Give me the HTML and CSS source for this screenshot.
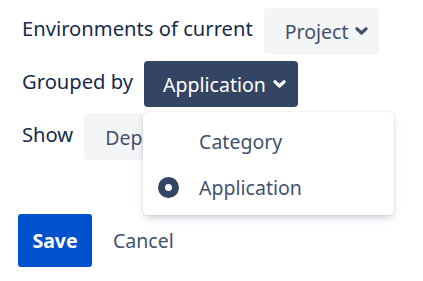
FILE: index.html
```html
<!DOCTYPE html>
<html lang="en">
<head>
<meta charset="UTF-8">
<title>Environment settings</title>
<link rel="stylesheet" href="styles.css">
</head>
<body>

<div class="settings">
  <div class="row">
    <span class="label">Environments of current</span>
    <button class="select">Project <svg class="chev" viewBox="0 0 13 8"><path d="M2 1.8 6.5 6 11 1.8"/></svg></button>
  </div>

  <div class="row">
    <span class="label">Grouped by</span>
    <div class="picker">
      <button class="select open">Application <svg class="chev" viewBox="0 0 13 8"><path d="M2 1.8 6.5 6 11 1.8"/></svg></button>
      <ul class="menu">
        <li><span class="radio"></span>Category</li>
        <li><span class="radio checked"></span>Application</li>
      </ul>
    </div>
  </div>

  <div class="row">
    <span class="label">Show</span>
    <button class="select">Deployments <svg class="chev" viewBox="0 0 13 8"><path d="M2 1.8 6.5 6 11 1.8"/></svg></button>
  </div>

  <div class="actions">
    <button class="save">Save</button>
    <button class="cancel">Cancel</button>
  </div>
</div>

</body>
</html>
```

FILE: styles.css
```css
body {
    margin: 0;
    background: #fff;
    font-family: "Noto Sans", "Open Sans", sans-serif;
    color: #172b4d;
}

.settings {
    padding: 8px 0 0 18px;
}

.row {
    display: flex;
    align-items: center;
    gap: 11px;
    margin-bottom: 7px;
    height: 46px;
}

.label {
    font-size: 20.2px;
    padding-left: 4px;
    margin-top: -6px;
}

button {
    font-family: inherit;
    cursor: pointer;
    border: none;
}

.select {
    display: flex;
    align-items: center;
    gap: 7px;
    height: 46px;
    padding: 0 11px 0 21px;
    background: #f4f5f7;
    color: #42526e;
    font-size: 19.5px;
    border-radius: 4px;
}

.select.open {
    background: #344563;
    color: #fff;
    padding: 0 12px 0 19px;
}

.chev {
    width: 13px;
    height: 8px;
    fill: none;
    stroke: currentColor;
    stroke-width: 3.2;
    stroke-linecap: round;
    stroke-linejoin: round;
}

.picker {
    position: relative;
}

.menu {
    position: absolute;
    top: 51px;
    left: -1px;
    width: 251px;
    margin: 0;
    padding: 6px 0 5px;
    list-style: none;
    background: #fff;
    border-radius: 4px;
    box-shadow: 0 4px 8px -2px rgba(9, 30, 66, 0.25), 0 0 1px rgba(9, 30, 66, 0.31);
    z-index: 2;
}

.menu li {
    display: flex;
    align-items: center;
    height: 46px;
    padding-left: 15px;
    font-size: 19.5px;
    color: #42526e;
}

.radio {
    width: 21px;
    height: 21px;
    margin-right: 20px;
    box-sizing: border-box;
    border-radius: 50%;
}

.radio.checked {
    border: 7px solid #344563;
    background: #fff;
}

.actions {
    display: flex;
    align-items: center;
    gap: 21px;
    margin-top: 54px;
}

.save {
    width: 74px;
    height: 53px;
    background: #0052cc;
    color: #fff;
    font-size: 19.5px;
    font-weight: bold;
    border-radius: 3px;
}

.cancel {
    background: none;
    color: #42526e;
    font-size: 19.5px;
    padding: 0;
}
```
